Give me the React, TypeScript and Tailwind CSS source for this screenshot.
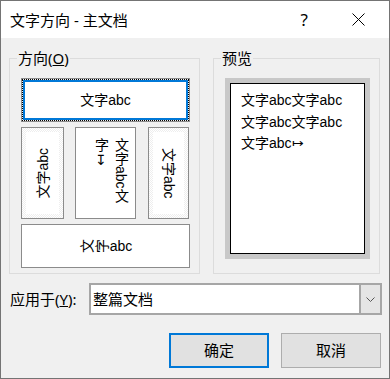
import React from 'react';

const ui = "font-['Noto_Sans','Noto_Sans_CJK_SC',sans-serif]";
const sample = "font-['Liberation_Sans','Noto_Sans_CJK_SC',sans-serif]";

const dither =
  'bg-[repeating-conic-gradient(#eeeeee_0%_25%,#ffffff_0%_50%)] bg-[length:2px_2px]';

const App = () => {
  return <div className={`w-[390px] h-[379px] border border-[#747474] flex flex-col text-black ${ui}`}>
      {/* title bar */}
      <div className="h-[37px] shrink-0 bg-white flex items-center pl-[9px]">
        <span className="text-[15px] leading-[20px]">文字方向 - 主文档</span>
        <span className="ml-auto text-[17px] leading-[20px] mr-[44px]">?</span>
        <svg width="13" height="13" viewBox="0 0 13 13" className="mr-[24px]">
          <path d="M0.5 0.5L12.5 12.5M12.5 0.5L0.5 12.5" stroke="#000" strokeWidth="1" />
        </svg>
      </div>

      <div className="flex-1 bg-[#f0f0f0] px-[8px] pt-[10px]">
        <div className="flex gap-[13px]">
          {/* 方向 */}
          <fieldset className="w-[191px] h-[226px] border border-[#dcdcdc] px-[7px]">
            <legend className="px-[1px] text-[15px] leading-[20px]">
              方向(<span className="underline">O</span>)
            </legend>
            <div className={`pl-[4px] pt-[10px] flex flex-col gap-[5px] text-[14px] ${sample}`}>
              <div className="w-[169px] h-[44px] border border-[#8c8c8c]">
                <div className="h-full border border-dotted border-black">
                  <div className="h-full border-2 border-[#0078d7] bg-white flex items-center justify-center">
                    文字abc
                  </div>
                </div>
              </div>

              <div className="h-[92px] flex">
                <div className={`w-[43px] border border-[#8b8b8b] p-[4px] ${dither}`}>
                  <div className="h-full bg-white flex items-center justify-center">
                    <span className="[writing-mode:vertical-rl] [text-orientation:sideways] rotate-180 leading-[16px]">文字abc</span>
                  </div>
                </div>
                <div className="ml-[11px] w-[61px] border border-[#8b8b8b] bg-white flex justify-end pt-[10px] pr-[4px]">
                  <div className="[writing-mode:vertical-rl] h-[70px] leading-[20px]">
                    文字abc文字<span className="[text-orientation:upright]">↧</span>
                  </div>
                </div>
                <div className={`ml-[12px] w-[41px] border border-[#8b8b8b] p-[4px] ${dither}`}>
                  <div className="h-full bg-white flex items-center justify-center">
                    <span className="[writing-mode:vertical-rl] [text-orientation:sideways] leading-[16px]">文字abc</span>
                  </div>
                </div>
              </div>

              <div className="w-[169px] h-[44px] border border-[#8b8b8b] bg-white flex items-center justify-center">
                <span className="w-[15px] h-[16px] leading-[16px] flex items-center justify-center -rotate-90">文</span>
                <span className="w-[15px] h-[16px] leading-[16px] flex items-center justify-center -rotate-90">字</span>
                <span className="ml-[1px]">abc</span>
              </div>
            </div>
          </fieldset>

          {/* 预览 */}
          <fieldset className="w-[167px] h-[226px] border border-[#dcdcdc] px-[7px]">
            <legend className="px-[1px] text-[15px] leading-[20px]">预览</legend>
            <div className="pl-[4px] pt-[10px]">
              <div className="w-[145px] h-[181px] bg-[#c8c8c8] p-[5px]">
                <div className={`h-full bg-white border border-black pl-[10px] pt-[6px] text-[14px] leading-[21.5px] ${sample}`}>
                  <div>文字abc文字abc</div>
                  <div>文字abc文字abc</div>
                  <div>文字abc↦</div>
                </div>
              </div>
            </div>
          </fieldset>
        </div>

        {/* 应用于 */}
        <div className="mt-[9px] flex items-center">
          <span className="w-[80px] shrink-0 pl-[1px] text-[15px] leading-[20px]">
            应用于(<span className="underline">Y</span>):
          </span>
          <div className="w-[293px] h-[32px] shrink-0 border-2 border-[#a6a6a6] bg-white flex">
            <span className="flex-1 pl-[2px] text-[15px] leading-[28px]">整篇文档</span>
            <div className="w-[21px] bg-[#e5e5e5] border-l-2 border-[#a6a6a6] flex items-center justify-center">
              <svg width="9" height="5" viewBox="0 0 9 5">
                <path d="M0.5 0.5L4.5 4.5L8.5 0.5" stroke="#555" strokeWidth="1" fill="none" />
              </svg>
            </div>
          </div>
        </div>

        {/* buttons */}
        <div className="mt-[18px] flex justify-end">
          <button className="w-[100px] h-[35px] border-2 border-[#0078d7] bg-[#e1e1e1] text-[15px]">确定</button>
          <button className="ml-[12px] w-[100px] h-[35px] border border-[#adadad] bg-[#e1e1e1] text-[15px]">取消</button>
        </div>
      </div>
    </div>;
};

export default App;
